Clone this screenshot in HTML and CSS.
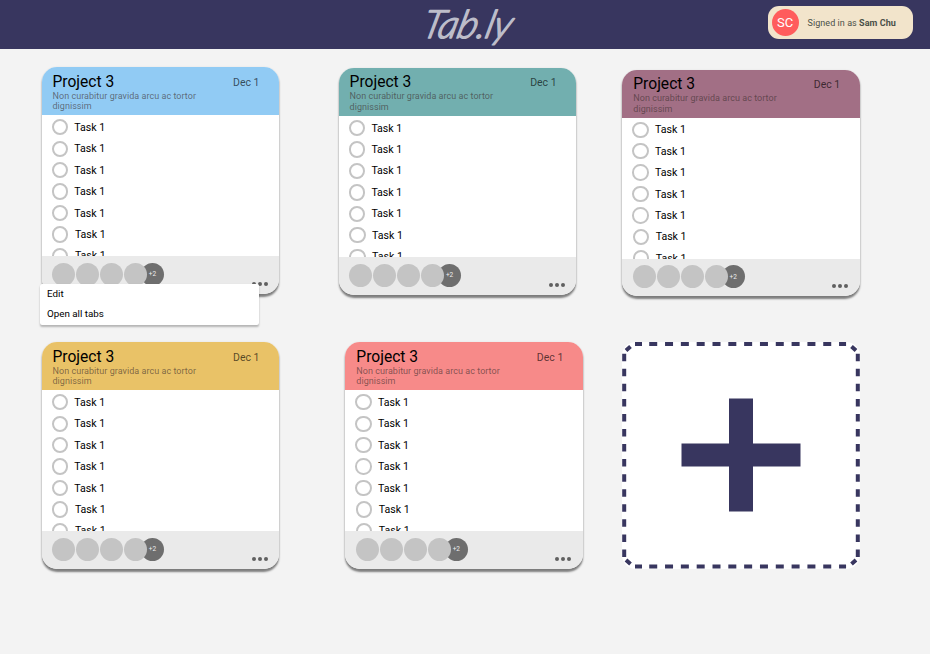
FILE: index.html
```
<!DOCTYPE html>
<html lang="en">
<head>
<meta charset="utf-8">
<title>Tab.ly</title>
<link rel="stylesheet" href="styles.css">
</head>
<body>
<header class="topbar">
  <svg class="logo" width="96" height="49" viewBox="0 0 96 49" role="img" aria-label="Tab.ly"><text x="8" y="38.5" textLength="89" lengthAdjust="spacing" transform="skewX(-14)">Tab.ly</text></svg>
  <div class="account"><span class="initials">SC</span><span class="signed">Signed in as <b>Sam Chu</b></span></div>
</header>
<main class="board"></main>
<script src="app.js"></script>
</body>
</html>
```
FILE: styles.css
```
*, *::before { box-sizing: border-box; }
body { margin: 0; background: #f3f3f3; font-family: Roboto, "Liberation Sans", sans-serif; color: #000; height: 654px; overflow: hidden; }
.topbar { height: 49px; background: #38365f; display: flex; justify-content: space-between; align-items: flex-start; padding: 0 17.5px 0 422px; }
.logo { display: block; overflow: visible; fill: #bdbdca; font: italic 300 39px Lato, sans-serif; stroke: #bdbdca; stroke-width: 1.5px; stroke-linejoin: round; }
.account { width: 145px; height: 33px; margin-top: 6px; border-radius: 11px; background: #f2e4cb; display: flex; align-items: center; padding-left: 4px; }
.initials { width: 27px; height: 27px; border-radius: 50%; background: #ff5c5c; color: #fff; font-size: 13px; display: flex; align-items: center; justify-content: center; }
.signed { margin-left: 9px; font-size: 9px; letter-spacing: .06px; color: #4a5048; white-space: nowrap; }
.signed b { font-weight: 700; }
.board { display: flex; flex-direction: column; padding-left: 41.5px; }
.row { display: flex; align-items: flex-start; height: 275px; }
.row:first-child { margin-top: 18.4px; }
.card { position: relative; flex: none; width: 237.5px; height: 226.5px; }
.panel { height: 226.5px; border-radius: 15px; overflow: hidden; background: #fff; box-shadow: 0 2.5px 2px rgba(0,0,0,.48), 0 0 2px rgba(0,0,0,.08); display: flex; flex-direction: column; }
.c2 { margin: .8px 0 0 59.6px; }
.c3 { margin: 2.5px 0 0 46.2px; }
.c5 { margin-left: 66.3px; }
.head { height: 48px; flex: none; padding: 6.3px 19.5px 0 11px; display: flex; justify-content: space-between; }
.blue { background: #91cbf4; }
.teal { background: #72afaf; }
.plum { background: #a26f85; }
.gold { background: #e9c267; }
.coral { background: #f78a89; }
.title { margin: 0; font-size: 15.6px; line-height: 17px; font-weight: 400; }
.desc { margin: 0; width: 160px; font-size: 9px; line-height: 10.4px; color: rgba(60,45,45,.62); letter-spacing: .04px; }
.date { font-size: 10.5px; line-height: 17px; color: rgba(0,0,0,.65); }
.tasks { height: 141px; flex: none; overflow: hidden; margin: 0; padding: 1.2px 0 0 10px; list-style: none; }
.task { height: 21.45px; display: flex; align-items: center; font-size: 10.6px; }
.task::before { content: ""; width: 16.4px; height: 16.4px; border: 2px solid #c4c4c4; border-radius: 50%; margin-right: 6.4px; }
.task:nth-child(n+6) { padding-left: .6px; }
.foot { flex: 1; background: #eaeaea; display: flex; padding: 6.5px 11.5px 0 10.5px; }
.people { display: flex; gap: 1px; }
.avatar { width: 23px; height: 23px; border-radius: 50%; background: #c4c4c4; position: relative; z-index: 1; }
.more { width: 23px; height: 23px; margin-left: -7px; border-radius: 50%; background: #6e6e6e; color: #eee; font-size: 6.5px; display: flex; align-items: center; justify-content: center; }
.dots { margin: 19px 0 0 auto; display: flex; gap: 2px; height: 4px; }
.dots i { width: 4px; height: 4px; border-radius: 50%; background: #606060; }
.menu { position: absolute; z-index: 2; left: -1.2px; top: 216.8px; width: 219px; height: 41px; background: #fff; border-radius: 2px; box-shadow: 0 2px 2px rgba(0,0,0,.25), 0 0 1px rgba(0,0,0,.1); font-size: 9.8px; line-height: 19.5px; padding-left: 6.7px; }
.add { flex: none; margin-left: 39px; width: 238px; height: 227px; }
.add svg { display: block; }
```
FILE: app.js
```
const rows = [
  [["c1", "blue"], ["c2", "teal"], ["c3", "plum"]],
  [["c4", "gold"], ["c5", "coral"]]
];
const menu = `<div class="menu"><div>Edit</div><div>Open all tabs</div></div>`;
const card = ([slot, color]) => `
<article class="card ${slot}">
  <div class="panel">
    <div class="head ${color}"><div><h2 class="title">Project 3</h2><p class="desc">Non curabitur gravida arcu ac tortor dignissim</p></div><span class="date">Dec 1</span></div>
    <ul class="tasks">${'<li class="task">Task 1</li>'.repeat(7)}</ul>
    <div class="foot"><div class="people">${'<span class="avatar"></span>'.repeat(4)}<span class="more">+2</span></div><div class="dots"><i></i><i></i><i></i></div></div>
  </div>
  ${slot === "c1" ? menu : ""}
</article>`;

// Dashed edges: each side has its own run of dashes, with one dash on every corner.
const dashes = () => {
  let d = "";
  for (let i = 0; i < 14; i++) {
    const x = 15.2 + i * 15.82;
    const w = i === 0 || i === 13 ? 7 : 8;
    const s = i === 0 ? 13 : x - 4 + 0.2;
    d += `M${s} 2h${w}M${s} 224.5h${w}`;
  }
  for (let i = 0; i < 14; i++) {
    const y = 11.7 + i * 15.06;
    d += `M2.2 ${y}v7.5M235.8 ${y}v7.5`;
  }
  return d + "M4 8.5L8.5 4.5M229.5 4.5L234 8.5M4 218L8.5 222M229.5 222L234 218";
};
const add = `<div class="add"><svg width="238" height="227" viewBox="0 0 238 227" role="img" aria-label="Add project">
  <rect width="238" height="227" rx="14" fill="#fff"/>
  <path d="${dashes()}" stroke="#38365f" stroke-width="4" fill="none"/>
  <path d="M107 56.5h24v45h47.5v23H131v45h-24v-45H59.5v-23H107z" fill="#38365f"/>
</svg></div>`;
document.querySelector(".board").innerHTML = rows.map((r, i) =>
  `<section class="row">${r.map(card).join("")}${i === 1 ? add : ""}</section>`).join("");
```
